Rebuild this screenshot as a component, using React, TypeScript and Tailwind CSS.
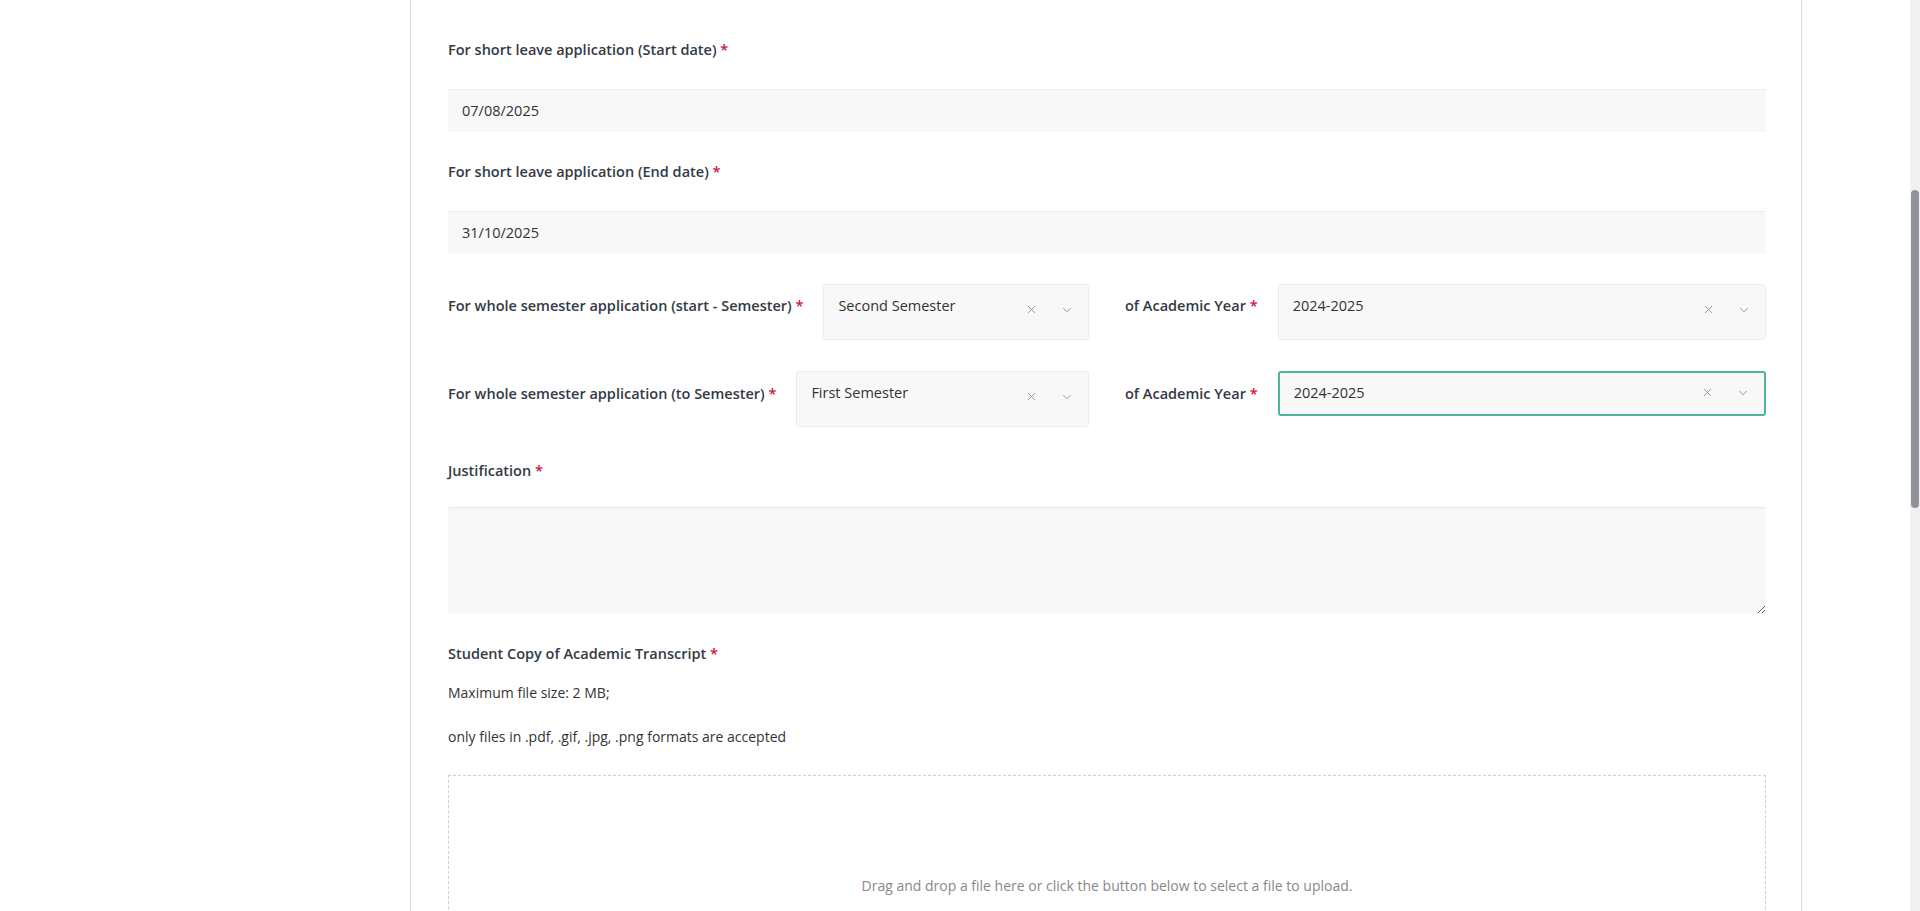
import { ChevronDown, X } from "lucide-react";

const Req = () => <span className="text-[#d0103a]"> *</span>;

const Select = ({ value, focused }: { value: string; focused?: boolean }) => (
  <div
    className={`flex-1 flex justify-between rounded-[3px] bg-[#f8f8f8] pl-[14px] pr-[14px] ${
      focused
        ? "h-[45px] items-center border-2 border-[#4fb3a0]"
        : "h-[56px] border border-[#ececec] pt-[10px]"
    }`}
  >
    <span className="text-[14.5px] text-[#333]">{value}</span>
    <div className={`flex gap-[22px] text-[#888] ${focused ? "" : "mt-[8px]"}`}>
      <X size={13} strokeWidth={1.5} />
      <ChevronDown size={14} strokeWidth={1.5} />
    </div>
  </div>
);

const Label = ({ children }: { children: React.ReactNode }) => (
  <div className="text-[14.5px] font-semibold text-[#333a45]">{children}</div>
);

export default function App() {
  return (
    <div className="relative h-[911px] overflow-hidden bg-white" style={{ fontFamily: '"Open Sans", sans-serif' }}>
      <div className="ml-[410px] w-[1392px] h-full border-x border-[#dcdcdc] pl-[37px] pr-[35px] pt-[39px]">
        <Label>For short leave application (Start date)<Req /></Label>
        <div className="mt-[28px] h-[43px] flex items-center px-[14px] bg-[#f8f8f8] border-t border-[#ececec] text-[14.5px] text-[#333]">07/08/2025</div>
        <div className="mt-[29px]"><Label>For short leave application (End date)<Req /></Label></div>
        <div className="mt-[28px] h-[43px] flex items-center px-[14px] bg-[#f8f8f8] border-t border-[#ececec] text-[14.5px] text-[#333]">31/10/2025</div>

        <div className="mt-[30px] grid grid-cols-2 gap-x-[36px]">
          <div className="flex items-start gap-[20px]">
            <div className="pt-[11px]"><Label>For whole semester application (start - Semester)<Req /></Label></div>
            <Select value="Second Semester" />
          </div>
          <div className="flex items-start gap-[20px]">
            <div className="pt-[11px]"><Label>of Academic Year<Req /></Label></div>
            <Select value="2024-2025" />
          </div>
        </div>

        <div className="mt-[31px] grid grid-cols-2 gap-x-[36px]">
          <div className="flex items-start gap-[20px]">
            <div className="pt-[12px]"><Label>For whole semester application (to Semester)<Req /></Label></div>
            <Select value="First Semester" />
          </div>
          <div className="flex items-start gap-[20px]">
            <div className="pt-[12px]"><Label>of Academic Year<Req /></Label></div>
            <Select value="2024-2025" focused />
          </div>
        </div>

        <div className="mt-[33px]"><Label>Justification<Req /></Label></div>
        <textarea className="mt-[26px] block w-full h-[107px] bg-[#f8f8f8] border-t border-[#e6e6e6] rounded-[3px] outline-none" />

        <div className="mt-[29px]"><Label>Student Copy of Academic Transcript<Req /></Label></div>
        <div className="mt-[17px] text-[14px] text-[#333]">Maximum file size: 2 MB;</div>
        <div className="mt-[23px] text-[14px] text-[#333]">only files in .pdf, .gif, .jpg, .png formats are accepted</div>
        <div className="mt-[28px] h-[200px] border border-dashed border-[#cfcfcf] flex justify-center pt-[99px] text-[14px] text-[#888]">
          Drag and drop a file here or click the button below to select a file to upload.
        </div>
      </div>
      <div className="absolute right-0 top-0 h-full w-[10px] bg-[#f1f1f1]">
        <div className="mt-[190px] h-[318px] w-[8px] mx-auto rounded-full bg-[#909399]" />
      </div>
    </div>
  );
}
